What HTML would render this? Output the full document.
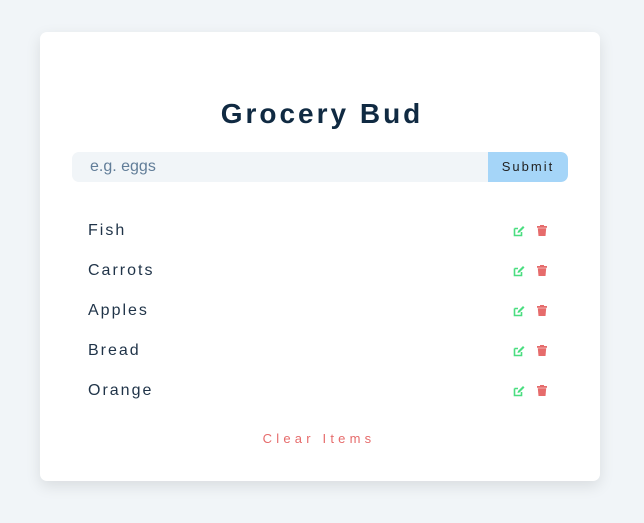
<!DOCTYPE html>
<html><head><style>
*{box-sizing:border-box;margin:0;padding:0}
body{width:644px;height:523px;background:#f1f5f8;font-family:"Liberation Sans",sans-serif;position:relative;overflow:hidden}
.card{position:absolute;left:40px;top:32px;width:560px;height:449px;background:#fff;border-radius:7px;box-shadow:0 5px 15px rgba(0,0,0,0.1)}
h3{position:absolute;left:0;right:0;top:98px;text-align:center;font-size:28px;font-weight:bold;letter-spacing:3px;color:#102a42}
.form{position:absolute;left:72px;top:152px;width:496px;height:30px;background:#f1f5f8;border-radius:7px;overflow:hidden}
.form span{position:absolute;left:18px;top:6px;font-size:16px;color:#617d98}
.btn{position:absolute;right:0;top:0;width:80px;height:30px;background:#a5d5f8;font-size:13px;letter-spacing:2px;color:#222;text-align:center;line-height:30px;border-radius:0 7px 7px 0}
.item{position:absolute;left:88px;font-size:16px;letter-spacing:2px;color:#1f3348}
.clear{position:absolute;left:-6px;right:0;top:431px;text-align:center;font-size:13px;letter-spacing:4.2px;color:#e66b6b}
</style></head><body>
<div class="card"></div>
<h3>Grocery Bud</h3>
<div class="form"><span>e.g. eggs</span><div class="btn">Submit</div></div>
<div class="item" style="top:222px">Fish</div>
<div class="item" style="top:262px">Carrots</div>
<div class="item" style="top:302px">Apples</div>
<div class="item" style="top:342px">Bread</div>
<div class="item" style="top:382px">Orange</div>
<svg width="644" height="523" style="position:absolute;left:0;top:0">
<defs>
<g id="e"><path d="M-4.5 -2.5 H-1 M-4.5 -2.5 V4.5 H2.5 V1" fill="none" stroke="#4ade80" stroke-width="1.6"/><path d="M-1.5 2 L-1 0 L4 -5 L5.5 -3.5 L0.5 1.5 Z" fill="#4ade80"/></g>
<g id="t"><rect x="-5" y="-5" width="10" height="1.8" fill="#e66b6b"/><rect x="-2" y="-6" width="4" height="1.5" fill="#e66b6b"/><path d="M-4.2 -2.8 H4.2 L3.5 5 H-3.5 Z" fill="#e66b6b"/></g>
</defs>
<use href="#e" x="519" y="231"/><use href="#t" x="542" y="231"/>
<use href="#e" x="519" y="271"/><use href="#t" x="542" y="271"/>
<use href="#e" x="519" y="311"/><use href="#t" x="542" y="311"/>
<use href="#e" x="519" y="351"/><use href="#t" x="542" y="351"/>
<use href="#e" x="519" y="391"/><use href="#t" x="542" y="391"/>
</svg>
<div class="clear">Clear Items</div>
</body></html>
